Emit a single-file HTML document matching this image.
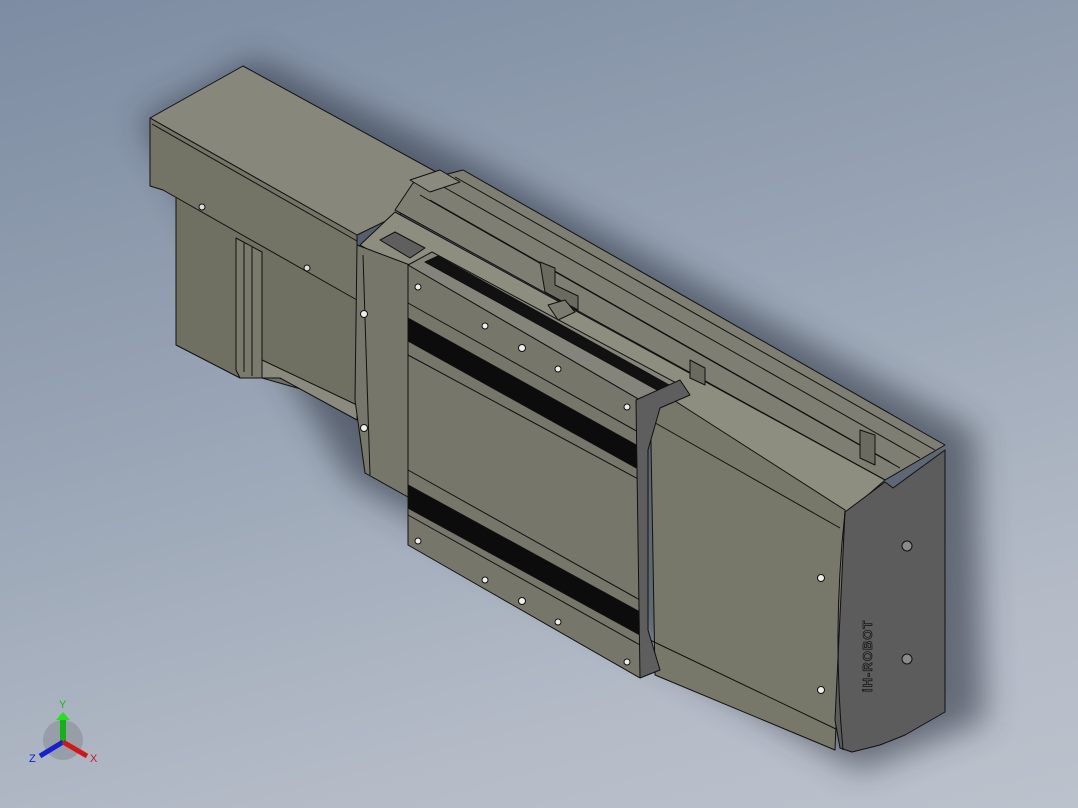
<!DOCTYPE html>
<html><head><meta charset="utf-8"><style>
html,body{margin:0;padding:0;width:1078px;height:808px;overflow:hidden}
body{background:linear-gradient(165deg,#7d8ca2 0%,#9aa6b6 45%,#b4bbc7 80%,#bcc2cc 100%)}
svg{position:absolute;left:0;top:0}
</style></head><body>
<svg width="1078" height="808" viewBox="0 0 1078 808" xmlns="http://www.w3.org/2000/svg">
<defs>
<filter id="sh" x="-20%" y="-20%" width="140%" height="140%"><feGaussianBlur stdDeviation="16"/></filter>
</defs>
<g stroke="#111" stroke-width="1" stroke-linejoin="round">
<polygon points="255,58 475,162 975,432 985,720 860,770 350,480 140,120" fill="#2e3442" opacity="0.6" filter="url(#sh)" stroke="none"/>

<!-- motor lower body -->
<polygon points="176,195 357,298 357,405 262,378 240,378 176,345" fill="#6f6f62"/>
<polygon points="236,238 262,252 262,378 240,378 236,370" fill="#7a7a6d"/>
<line x1="244" y1="243" x2="244" y2="372"/><line x1="252" y1="247" x2="252" y2="376"/>
<polygon points="262,360 357,405 357,420 280,378 262,378" fill="#8a8a7e"/>
<!-- motor box -->
<polygon points="150,118 243,66 460,185 357,235" fill="#87877c"/>
<polygon points="150,118 357,235 357,300 163,190 150,186" fill="#737366"/>
<line x1="152" y1="124" x2="357" y2="241"/>
<circle cx="202" cy="207" r="3" fill="#ddd"/><circle cx="307" cy="268" r="3" fill="#ddd"/>

<!-- rail top surface -->
<polygon points="413,183 463,170 945,445 885,480 395,210" fill="#7e7e72"/>
<line x1="440" y1="185" x2="920" y2="458"/><line x1="455" y1="177" x2="935" y2="450"/>
<line x1="420" y1="195" x2="900" y2="468"/><line x1="430" y1="200" x2="890" y2="462"/>
<polygon points="410,180 440,170 460,182 430,192" fill="#8a8a7e"/>
<polygon points="360,245 395,212 885,480 845,515" fill="#8d8d80"/>
<polygon points="380,240 395,232 425,248 410,258" fill="#5f5f5f"/>

<!-- right body front face -->
<polygon points="650,385 845,510 835,750 655,675" fill="#77776a"/>
<line x1="650" y1="420" x2="840" y2="528"/>
<line x1="650" y1="640" x2="838" y2="730"/>
<circle cx="821" cy="578" r="3.5" fill="#eee"/><circle cx="821" cy="690" r="3.5" fill="#eee"/>
<polygon points="845,512 885,482 893,488 945,450 945,712 905,735 880,745 852,752 840,748 835,720" fill="#5c5c5c"/>
<path d="M845,512 Q832,630 843,750" fill="none"/>
<circle cx="907" cy="546" r="5" fill="#8a8a8a"/><circle cx="907" cy="659" r="5" fill="#8a8a8a"/>
<text x="0" y="0" transform="translate(872,692) rotate(-90)" font-family="Liberation Sans, sans-serif" font-size="13" font-weight="bold" fill="none" stroke="#111" stroke-width="0.7" letter-spacing="1">iH-ROBOT</text>

<!-- left end frame -->
<polygon points="357,245 410,265 408,497 365,473 355,400" fill="#76766a"/>
<line x1="363" y1="255" x2="370" y2="475"/>
<circle cx="364" cy="314" r="3.5" fill="#eee"/><circle cx="364" cy="428" r="3.5" fill="#eee"/>

<!-- carriage -->
<polygon points="408,265 432,252 680,385 640,400" fill="#84847a"/>
<polygon points="425,262 438,256 678,390 668,396" fill="#111"/>
<polygon points="408,265 640,400 640,678 408,545" fill="#76766a"/>
<polygon points="408,318 640,447 640,470 408,341" fill="#0c0c0c"/>
<polygon points="408,485 640,612 640,635 408,508" fill="#0c0c0c"/>
<line x1="408" y1="303" x2="640" y2="433"/><line x1="408" y1="355" x2="640" y2="480"/>
<line x1="408" y1="470" x2="640" y2="600"/><line x1="408" y1="515" x2="640" y2="645"/>
<polygon points="636,400 680,380 690,395 660,408 648,450 648,630 660,670 640,678" fill="#5e5e5e"/>
<g fill="#eee">
<circle cx="418" cy="287" r="3"/><circle cx="485" cy="326" r="3"/><circle cx="522" cy="348" r="3.5"/><circle cx="558" cy="369" r="3"/><circle cx="627" cy="407" r="3"/>
<circle cx="418" cy="541" r="3"/><circle cx="485" cy="580" r="3"/><circle cx="522" cy="601" r="3.5"/><circle cx="558" cy="622" r="3"/><circle cx="627" cy="662" r="3"/>
</g>
<polygon points="540,262 555,268 555,285 578,296 578,310 545,292" fill="#6a6a5f"/>
<polygon points="548,305 565,300 575,312 558,320" fill="#7a7a6e"/>
<polygon points="690,360 705,368 705,385 690,378" fill="#6a6a5f"/>
<polygon points="860,430 875,435 875,465 860,458" fill="#6a6a5f"/>
</g>
<g>
<circle cx="63" cy="740" r="20" fill="#8a8f96" opacity="0.6"/>
<rect x="60" y="718" width="6" height="24" fill="#18b018"/>
<polygon points="56,720 63,712 70,720" fill="#22e022"/>
<line x1="63" y1="742" x2="40" y2="756" stroke="#1520d0" stroke-width="5"/>
<line x1="63" y1="742" x2="87" y2="756" stroke="#d01818" stroke-width="5"/>
<text x="59" y="708" font-family="Liberation Sans,sans-serif" font-size="11" fill="#10c010">Y</text>
<text x="29" y="762" font-family="Liberation Sans,sans-serif" font-size="11" fill="#1520d0">Z</text>
<text x="90" y="762" font-family="Liberation Sans,sans-serif" font-size="11" fill="#d01818">X</text>
</g>
</svg>
</body></html>
